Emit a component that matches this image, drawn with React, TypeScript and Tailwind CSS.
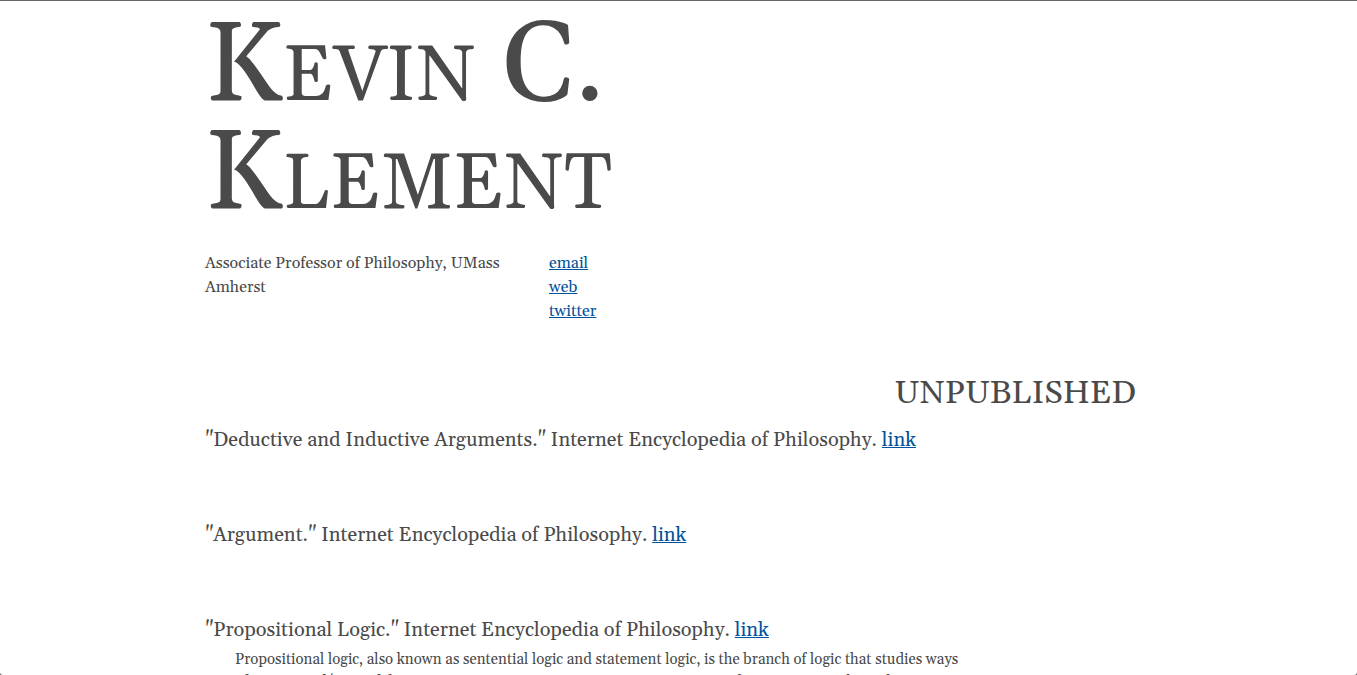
const links = ['email', 'web', 'twitter'];

const papers = [
  { title: '"Deductive and Inductive Arguments." Internet Encyclopedia of Philosophy.' },
  { title: '"Argument." Internet Encyclopedia of Philosophy.' },
  {
    title: '"Propositional Logic." Internet Encyclopedia of Philosophy.',
    abstract:
      'Propositional logic, also known as sentential logic and statement logic, is the branch of logic that studies ways of joining and/or modifying entire propositions, statements or sentences to form more complicated',
  },
];

export default function App() {
  return (
    <div className="h-screen bg-[#666666] pt-px font-[Gelasio,Georgia,'Liberation_Serif',serif] text-[#4a4a4a]">
      <div className="h-full overflow-hidden rounded-b-[3px] bg-white">
        <main className="mx-auto w-full max-w-[947px] pt-3">
          <header>
            <h1 className="max-w-[460px] text-[112px] leading-[108px] [font-variant:small-caps]">Kevin C. Klement</h1>
            <div className="mt-[22px] flex gap-6 text-base leading-6">
              <p className="w-[320px]">Associate Professor of Philosophy, UMass Amherst</p>
              <ul>
                {links.map((name) => (
                  <li key={name}>
                    <a href="#" className="text-[#00529b] underline decoration-1">{name}</a>
                  </li>
                ))}
              </ul>
            </div>
          </header>
          <section>
            <h2 className="mt-[46px] mb-2 pr-4 text-right text-[33px] leading-[48px] uppercase">Unpublished</h2>
            {papers.map((paper) => (
              <article key={paper.title} className="mb-[65px] text-xl leading-[30px]">
                <h3>
                  {paper.title} <a href="#" className="text-[#00529b] underline decoration-1">link</a>
                </h3>
                {paper.abstract && (
                  <p className="mt-1 ml-[30px] max-w-[736px] text-[15px] leading-[22px]">{paper.abstract}</p>
                )}
              </article>
            ))}
          </section>
        </main>
      </div>
    </div>
  );
}
